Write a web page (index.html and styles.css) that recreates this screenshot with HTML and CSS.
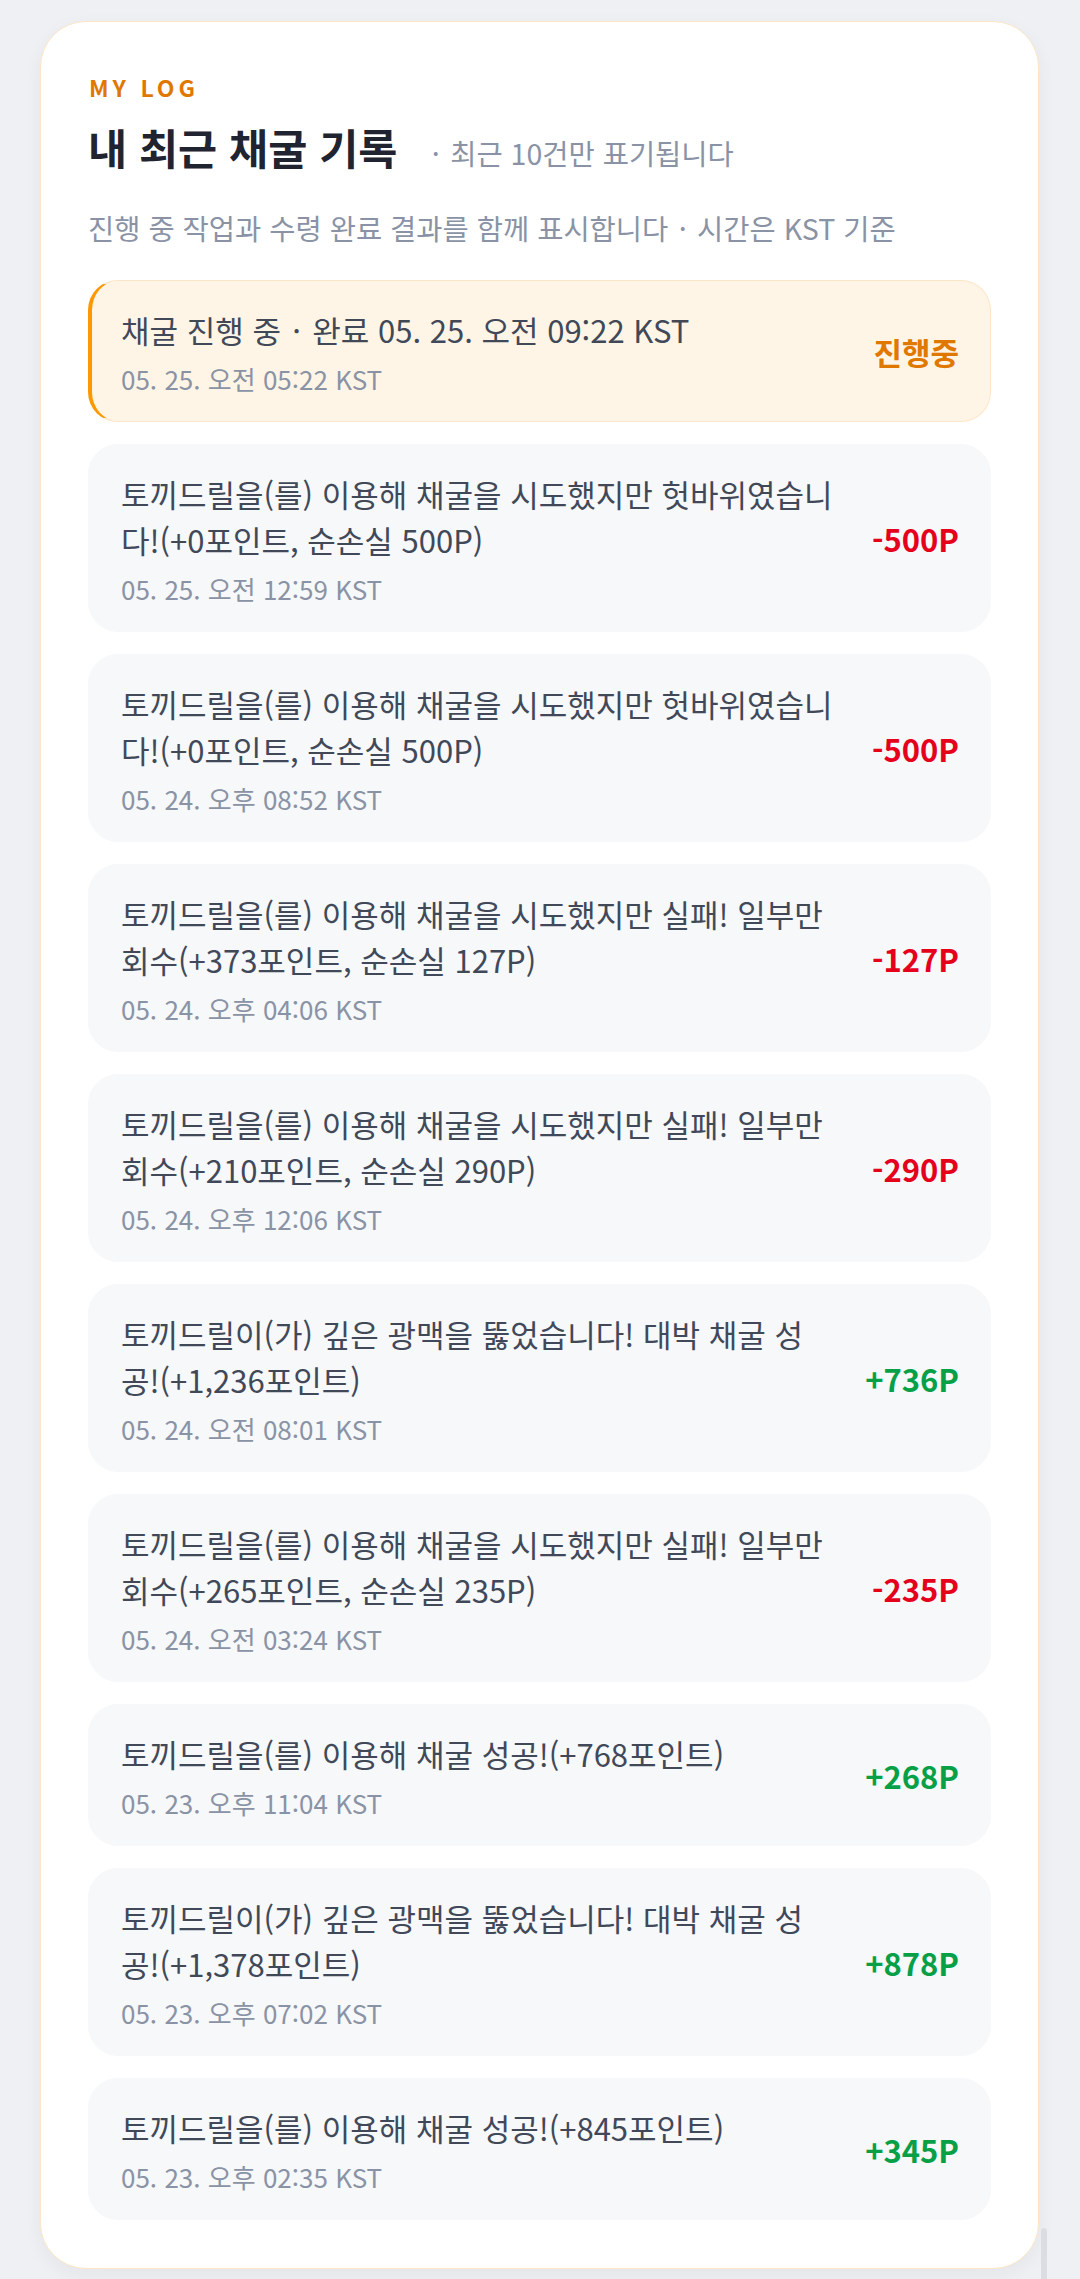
FILE: index.html
```html
<!DOCTYPE html>
<html lang="ko">

<head>
    <meta charset="UTF-8">
    <meta name="viewport" content="width=device-width, initial-scale=1.0">
    <title>내 최근 채굴 기록</title>
    <link rel="stylesheet" href="styles.css">
</head>

<body>
    <div class="card">
        <div class="eyebrow">MY LOG</div>
        <div class="head">
            <h2>내 최근 채굴 기록</h2>
            <span class="limit"><span class="dot">·</span> 최근 10건만 표기됩니다</span>
        </div>
        <p class="desc">진행 중 작업과 수령 완료 결과를 함께 표시합니다 <span class="dot">·</span> 시간은 KST 기준</p>

        <ul class="list">
            <li class="item pending">
                <div class="text">
                    <div class="msg">채굴 진행 중 <span class="dot">·</span> 완료 05. 25. 오전 09:22 KST</div>
                    <div class="time">05. 25. 오전 05:22 KST</div>
                </div>
                <div class="amount wait">진행중</div>
            </li>
            <li class="item">
                <div class="text">
                    <div class="msg">토끼드릴을(를) 이용해 채굴을 시도했지만 헛바위였습니다!(+0포인트, 순손실 500P)</div>
                    <div class="time">05. 25. 오전 12:59 KST</div>
                </div>
                <div class="amount minus">-500P</div>
            </li>
            <li class="item">
                <div class="text">
                    <div class="msg">토끼드릴을(를) 이용해 채굴을 시도했지만 헛바위였습니다!(+0포인트, 순손실 500P)</div>
                    <div class="time">05. 24. 오후 08:52 KST</div>
                </div>
                <div class="amount minus">-500P</div>
            </li>
            <li class="item">
                <div class="text">
                    <div class="msg">토끼드릴을(를) 이용해 채굴을 시도했지만 실패! 일부만 회수(+373포인트, 순손실 127P)</div>
                    <div class="time">05. 24. 오후 04:06 KST</div>
                </div>
                <div class="amount minus">-127P</div>
            </li>
            <li class="item">
                <div class="text">
                    <div class="msg">토끼드릴을(를) 이용해 채굴을 시도했지만 실패! 일부만 회수(+210포인트, 순손실 290P)</div>
                    <div class="time">05. 24. 오후 12:06 KST</div>
                </div>
                <div class="amount minus">-290P</div>
            </li>
            <li class="item">
                <div class="text">
                    <div class="msg">토끼드릴이(가) 깊은 광맥을 뚫었습니다! 대박 채굴 성공!(+1,236포인트)</div>
                    <div class="time">05. 24. 오전 08:01 KST</div>
                </div>
                <div class="amount plus">+736P</div>
            </li>
            <li class="item">
                <div class="text">
                    <div class="msg">토끼드릴을(를) 이용해 채굴을 시도했지만 실패! 일부만 회수(+265포인트, 순손실 235P)</div>
                    <div class="time">05. 24. 오전 03:24 KST</div>
                </div>
                <div class="amount minus">-235P</div>
            </li>
            <li class="item">
                <div class="text">
                    <div class="msg">토끼드릴을(를) 이용해 채굴 성공!(+768포인트)</div>
                    <div class="time">05. 23. 오후 11:04 KST</div>
                </div>
                <div class="amount plus">+268P</div>
            </li>
            <li class="item">
                <div class="text">
                    <div class="msg">토끼드릴이(가) 깊은 광맥을 뚫었습니다! 대박 채굴 성공!(+1,378포인트)</div>
                    <div class="time">05. 23. 오후 07:02 KST</div>
                </div>
                <div class="amount plus">+878P</div>
            </li>
            <li class="item">
                <div class="text">
                    <div class="msg">토끼드릴을(를) 이용해 채굴 성공!(+845포인트)</div>
                    <div class="time">05. 23. 오후 02:35 KST</div>
                </div>
                <div class="amount plus">+345P</div>
            </li>
        </ul>
    </div>
    <div class="scroll"></div>
</body>

</html>
```

FILE: styles.css
```css
* {
    padding: 0;
    margin: 0;
    box-sizing: border-box;
}

body {
    background-color: #eef0f3;
    font-family: "Noto Sans CJK KR", "Noto Sans", sans-serif;
    padding: 21px 41px 0 40px;
    position: relative;
    height: 2279px;
    overflow: hidden;
}

.card {
    background-color: #fff;
    border: 1px solid #fde6c6;
    border-radius: 46px;
    padding: 47px 47px 48px;
    box-shadow: 0 6px 18px rgba(30, 40, 60, .05);
}

.eyebrow {
    font-size: 23px;
    line-height: 36px;
    font-weight: 700;
    letter-spacing: 4px;
    color: #e07800;
    padding-left: 1px;
}

.head {
    display: flex;
    align-items: baseline;
    margin-top: 14px;
}

h2 {
    font-size: 42.5px;
    line-height: 56px;
    font-weight: 700;
    color: #1f2430;
}

.limit {
    margin-left: 32px;
    font-size: 28.5px;
    color: #8a93a5;
}

.dot {
    display: inline-block;
    width: 0.45em;
    text-align: center;
}

.desc {
    margin-top: 33px;
    font-size: 28.5px;
    line-height: 40px;
    color: #8a93a5;
}

.list {
    margin-top: 32px;
}

li {
    list-style: none;
}

.item {
    display: flex;
    align-items: center;
    gap: 24px;
    padding: 26px 31px 26px 32px;
    margin-bottom: 22px;
    background-color: #f6f8fa;
    border: 1px solid #f6f8fa;
    border-radius: 30px;
}

.item:last-child {
    margin-bottom: 0;
}

.pending {
    background-color: #fff5e6;
    border-color: #fde6c8;
    border-left: 4px solid #ff9800;
    padding-left: 29px;
}

.text {
    flex: 1;
}

.msg {
    font-size: 31px;
    line-height: 46px;
    color: #414959;
}

.time {
    margin-top: 10px;
    font-size: 26px;
    line-height: 32px;
    color: #8a93a5;
}

.amount {
    flex: 0 0 100px;
    text-align: right;
    font-size: 31px;
    font-weight: 700;
}

.wait {
    color: #e07800;
}

.minus {
    color: #e5001c;
}

.plus {
    color: #07a046;
}

.scroll {
    position: absolute;
    left: 1041px;
    top: 2228px;
    width: 6px;
    height: 60px;
    border-radius: 3px;
    background-color: #dcdde2;
}
```
